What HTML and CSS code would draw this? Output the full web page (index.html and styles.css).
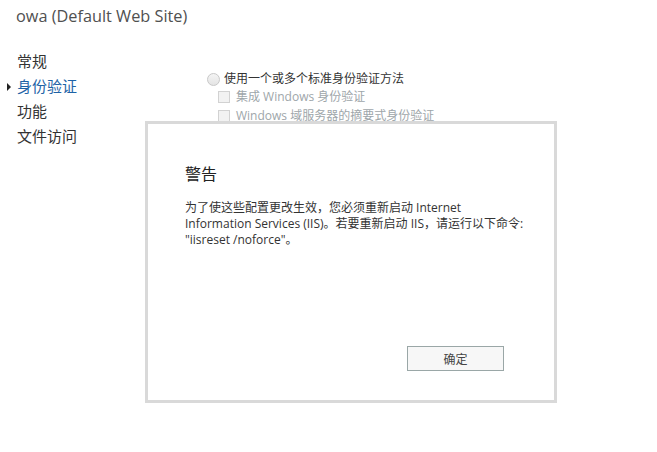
FILE: index.html
```html
<!DOCTYPE html>
<html lang="zh-CN">
<head>
<meta charset="utf-8">
<title>owa (Default Web Site)</title>
<link rel="stylesheet" href="styles.css">
</head>
<body>
<div class="page">
  <header class="site-title">owa (Default Web Site)</header>
  <div class="main">
    <nav class="nav">
      <div class="nav-item">常规</div>
      <div class="nav-item active"><span class="arrow"></span>身份验证</div>
      <div class="nav-item">功能</div>
      <div class="nav-item">文件访问</div>
    </nav>
    <section class="content">
      <div class="option">
        <span class="radio"></span>
        <span class="option-label">使用一个或多个标准身份验证方法</span>
      </div>
      <div class="sub-options">
        <div class="check-row"><span class="checkbox"></span><span class="check-label">集成 Windows 身份验证</span></div>
        <div class="check-row"><span class="checkbox"></span><span class="check-label">Windows 域服务器的摘要式身份验证</span></div>
      </div>
    </section>
  </div>

  <div class="dialog">
    <h2 class="dialog-title">警告</h2>
    <p class="dialog-text">为了使这些配置更改生效，您必须重新启动 Internet<br>Information Services (IIS)。若要重新启动 IIS，请运行以下命令:<br>"iisreset /noforce"。</p>
    <div class="dialog-footer">
      <button class="btn">确定</button>
    </div>
  </div>
</div>
</body>
</html>
```

FILE: styles.css
```css
html, body {
  margin: 0;
  padding: 0;
  background: #ffffff;
}

body {
  font-family: "Segoe UI", "Open Sans", "Noto Sans CJK SC", sans-serif;
  color: #333333;
  width: 657px;
  height: 452px;
  overflow: hidden;
}

.page {
  position: relative;
  width: 657px;
  height: 452px;
}

.site-title {
  padding: 4px 0 0 16px;
  font-size: 16.3px;
  line-height: 24px;
  color: #505050;
}

.main {
  display: flex;
  margin-top: 20px;
}

.nav {
  display: flex;
  flex-direction: column;
  width: 192px;
  padding-left: 17px;
  padding-top: 1px;
  flex-shrink: 0;
}

.nav-item {
  position: relative;
  font-size: 15px;
  line-height: 25px;
  color: #333333;
  white-space: nowrap;
}

.nav-item.active {
  color: #1e63a6;
}

.arrow {
  position: absolute;
  left: -10px;
  top: 9px;
  width: 0;
  height: 0;
  border-top: 4px solid transparent;
  border-bottom: 4px solid transparent;
  border-left: 4px solid #222222;
}

.content {
  display: flex;
  flex-direction: column;
  padding-top: 23px;
  margin-left: -2px;
}

.option {
  display: flex;
  align-items: center;
  gap: 4px;
  height: 16px;
  font-size: 12px;
}

.radio {
  width: 11px;
  height: 11px;
  border: 1px solid #c8c8c8;
  border-radius: 50%;
  background: linear-gradient(#f4f4f4, #e4e4e4);
}

.option-label {
  color: #333333;
  line-height: 16px;
}

.sub-options {
  display: flex;
  flex-direction: column;
  padding-left: 11px;
  padding-top: 3px;
  gap: 6px;
}

.check-row {
  display: flex;
  align-items: center;
  gap: 6px;
  height: 13px;
  font-size: 12px;
}

.checkbox {
  width: 10px;
  height: 10px;
  border: 1px solid #d2d2d2;
  background: #f2f2f2;
}

.check-label {
  color: #9ea6aa;
  line-height: 16px;
  white-space: nowrap;
}

.dialog {
  position: absolute;
  left: 145px;
  top: 121px;
  width: 406px;
  height: 276px;
  border: 3px solid #d9d9d9;
  background: #ffffff;
  display: flex;
  flex-direction: column;
  padding: 0;
}

.dialog-title {
  margin: 39px 0 0 37px;
  font-size: 16px;
  font-weight: normal;
  line-height: 22px;
  color: #222222;
}

.dialog-text {
  margin: 15px 0 0 37px;
  width: 360px;
  font-size: 12px;
  line-height: 16px;
  color: #333333;
  white-space: nowrap;
}

.dialog-footer {
  margin-top: auto;
  display: flex;
  justify-content: flex-end;
  padding: 0 50px 29px 0;
}

.btn {
  width: 97px;
  height: 25px;
  border: 1px solid #9aa7a7;
  background: #f7f7f7;
  font-family: "Segoe UI", "Open Sans", "Noto Sans CJK SC", sans-serif;
  font-size: 12px;
  color: #444444;
  padding: 0;
}
```
